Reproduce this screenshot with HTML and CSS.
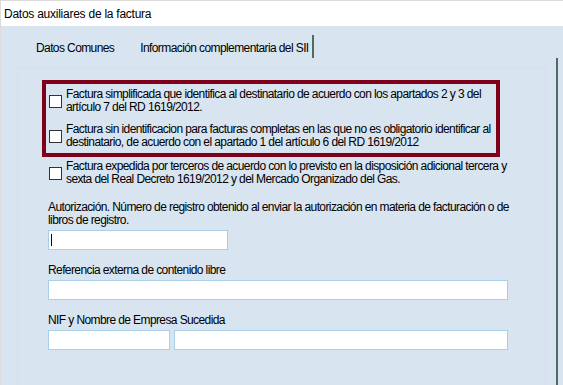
FILE: index.html
```html
<!DOCTYPE html>
<html lang="es">
<head>
  <meta charset="UTF-8" />
  <meta name="viewport" content="width=device-width, initial-scale=1.0"/>
  <title>Datos auxiliares de la factura</title>
  <link rel="stylesheet" href="styles.css">
</head>
<body>
  <div class="titlebar">Datos auxiliares de la factura</div>

  <div class="window">
    <div class="main">
      <div class="tabs">
        <span class="tab">Datos Comunes</span>
        <span class="tab tab-active">Información complementaria del SII</span>
      </div>

      <div class="panel">
        <div class="highlight">
          <div class="check-row">
            <span class="check"></span>
            <span class="check-text">Factura simplificada que identifica al destinatario de acuerdo con los apartados 2 y 3 del<br>artículo 7 del RD 1619/2012.</span>
          </div>
          <div class="check-row check-row-second">
            <span class="check"></span>
            <span class="check-text">Factura sin identificacion para facturas completas en las que no es obligatorio identificar al<br>destinatario, de acuerdo con el apartado 1 del artículo 6 del RD 1619/2012</span>
          </div>
        </div>

        <div class="check-row check-row-outer">
          <span class="check"></span>
          <span class="check-text">Factura expedida por terceros de acuerdo con lo previsto en la disposición adicional tercera y<br>sexta del Real Decreto 1619/2012 y del Mercado Organizado del Gas.</span>
        </div>

        <div class="field field-first">
          <div class="field-label">Autorización. Número de registro obtenido al enviar la autorización en materia de facturación o de<br>libros de registro.</div>
          <div class="input input-short"><span class="caret"></span></div>
        </div>

        <div class="field">
          <div class="field-label">Referencia externa de contenido libre</div>
          <div class="input input-long"></div>
        </div>

        <div class="field">
          <div class="field-label">NIF y Nombre de Empresa Sucedida</div>
          <div class="input-pair">
            <div class="input input-nif"></div>
            <div class="input input-name"></div>
          </div>
        </div>
      </div>
    </div>
    <div class="edge"></div>
  </div>
</body>
</html>
```

FILE: styles.css
```css
* {
  margin: 0;
  padding: 0;
  box-sizing: border-box;
}

body {
  width: 563px;
  height: 385px;
  overflow: hidden;
  border-left: 1px solid #dcdcdc;
  font-family: "Liberation Sans", Arial, sans-serif;
  font-size: 12px;
  line-height: 13px;
  letter-spacing: -0.6px;
  color: #000;
  background: #d8e4f0;
}

.titlebar {
  height: 26px;
  padding: 7px 0 0 3px;
  background: #fff;
  border-top: 1px solid #dcdcdc;
  letter-spacing: -0.25px;
}

.window {
  display: flex;
  height: 359px;
  background: #d8e4f0;
}

.main {
  width: 555px;
  display: flex;
  flex-direction: column;
}

.edge {
  width: 7px;
  margin-top: 32px;
  border-left: 2px solid #4f6c61;
}

/* tabs */
.tabs {
  height: 41px;
  display: flex;
  align-items: flex-start;
  gap: 16px;
  padding: 9px 0 0 30px;
}

.tab {
  height: 23px;
  padding: 7px 5px 0;
}

.tab-active {
  padding-right: 3px;
  border-right: 2px solid #4f6c61;
}

/* panel */
.panel {
  flex: 1;
  width: 529px;
  margin-left: 16px;
  padding: 12px 0 0 24px;
  border: 1px solid #dedede;
  border-bottom: none;
}

.highlight {
  width: 458px;
  padding: 4px 3px;
  border: 4px solid #7f001b;
}

.check-row {
  display: flex;
  align-items: center;
  gap: 4px;
}

.check-row-second {
  margin-top: 9px;
}

.check-row-outer {
  margin-top: 3px;
  padding-left: 7px;
}

.check {
  width: 13px;
  height: 13px;
  flex: none;
  background: #fff;
  border: 1px solid #333;
}

.check-text {
  white-space: nowrap;
}

/* fields */
.field {
  margin-top: 14px;
  padding-left: 6px;
}

.field-first {
  margin-top: 15px;
}

.field-label {
  margin-bottom: 3px;
  white-space: nowrap;
}

.input {
  height: 20px;
  background: #fff;
  border: 1px solid #a9d0ea;
}

.input-short {
  width: 180px;
  padding: 3px 0 0 2px;
}

.caret {
  display: block;
  width: 1px;
  height: 12px;
  background: #000;
}

.input-long {
  width: 460px;
}

.input-pair {
  display: flex;
  gap: 4px;
}

.input-nif {
  width: 122px;
}

.input-name {
  width: 334px;
}
```
